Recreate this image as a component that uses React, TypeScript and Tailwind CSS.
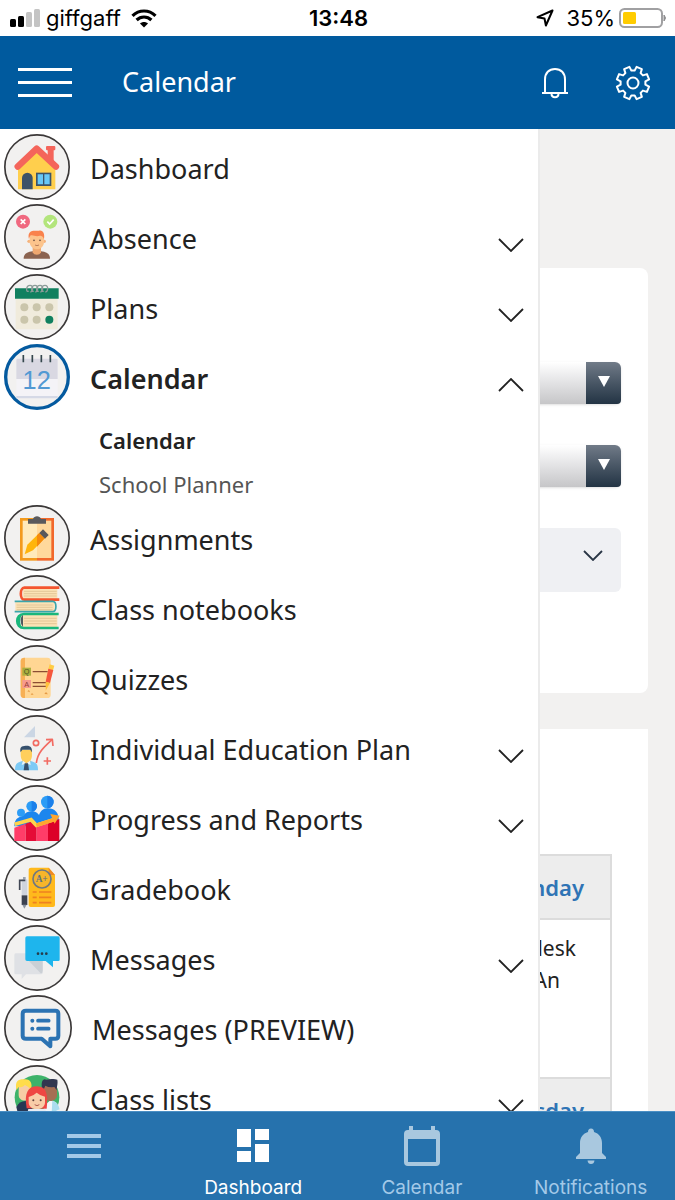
import type { ReactNode } from 'react';

type MenuItem = {
    label: string;
    icon: ReactNode;
    expandable?: boolean;
    active?: boolean;
    wide?: boolean;
    children?: string[];
};

const HouseIcon = () => (
    <>
        <path d="M131 44h18v50h-18z" fill="#f4655b" />
        <rect x="126" y="36" width="28" height="13" rx="3" fill="#f4655b" />
        <path d="M42 166v-68l56-50 56 50v68z" fill="#ffcf4d" />
        <path d="M41 98l57-54 58 54" fill="none" stroke="#f4655b" strokeWidth="19" strokeLinecap="round" strokeLinejoin="round" />
        <path d="M54 166v-34a16 16 0 0 1 32 0v34z" fill="#3d5368" />
        <rect x="96" y="116" width="46" height="40" fill="#3d5368" />
        <path d="M101 121h16v30h-16zM121 121h16v30h-16z" fill="#68c8f7" />
    </>
);

const AbsenceIcon = () => (
    <>
        <circle cx="57" cy="53" r="21" fill="#f0687f" />
        <path d="M50 46l14 14M64 46l-14 14" stroke="#fff" strokeWidth="5" />
        <circle cx="139" cy="53" r="21" fill="#b3e57c" />
        <path d="M130 53l7 7 12-13" fill="none" stroke="#fff" strokeWidth="5" />
        <path d="M59 164c0-15 10-20 27-22h25c17 2 27 7 27 22z" fill="#8b6350" />
        <path d="M86 125h25v20c-4 10-21 10-25 0z" fill="#efa870" />
        <circle cx="75" cy="112" r="5" fill="#f5b27b" />
        <circle cx="121" cy="112" r="5" fill="#f5b27b" />
        <path d="M77 98c0-12 43-12 43 0v16c0 11-9 22-21 22s-22-11-22-22z" fill="#fcc48c" />
        <path d="M75 105c-4-15 2-26 15-25h15c12-3 18 9 15 25-5-12-10-10-16-9-9 2-17-4-23-2-3 2-4 5-6 11z" fill="#f9824c" />
        <circle cx="90" cy="109" r="2.5" fill="#5b4038" />
        <circle cx="108" cy="109" r="2.5" fill="#5b4038" />
        <path d="M93 123q6 4 12 0" fill="none" stroke="#9a5c40" strokeWidth="2" />
    </>
);

const PlansIcon = () => (
    <>
        <path d="M35 73h126v93H35z" fill="#f0ebdc" />
        <path d="M33 43h131v31H33z" fill="#10805f" />
        <g fill="none" stroke="#8b9b98" strokeWidth="4">
            <path d="M75 51c-11 6-9-17 3-17s9 19 1 20" />
            <path d="M90 51c-11 6-9-17 3-17s9 19 1 20" />
            <path d="M105 51c-11 6-9-17 3-17s9 19 1 20" />
            <path d="M120 51c-11 6-9-17 3-17s9 19 1 20" />
        </g>
        <g fill="#cac5ab">
            <circle cx="61" cy="100" r="12" />
            <circle cx="98" cy="100" r="12" />
            <circle cx="136" cy="100" r="12" />
            <circle cx="61" cy="137" r="12" />
            <circle cx="98" cy="137" r="12" />
        </g>
        <circle cx="136" cy="137" r="12" fill="#10805f" />
    </>
);

const CalendarIcon = () => (
    <>
        <rect x="37" y="44" width="124" height="118" rx="4" fill="#f4f3f7" />
        <path d="M37 48q0-4 4-4h116q4 0 4 4v57H37z" fill="#d9d8e2" />
        <path d="M37 156h124v7H37z" fill="#d5d9e6" />
        <path d="M58 33v22M85 33v22M112 33v22M139 33v22" stroke="#35474d" strokeWidth="5" />
        <text x="98" y="134" textAnchor="middle" fontSize="76" fontFamily="Liberation Sans, sans-serif" fill="#5299d3">12</text>
    </>
);

const AssignmentsIcon = () => (
    <>
        <path d="M48 39h51v128H48z" fill="#f39a1c" />
        <path d="M99 39h51v128H99z" fill="#f1682b" />
        <path d="M56 47h43v112H56z" fill="#ffeabb" />
        <path d="M99 47h43v112H99z" fill="#ffd99c" />
        <path d="M72 56V42h15c3-11 21-11 24 0h15v14z" fill="#5a5a5c" />
        <path d="M62 148l8-29 36-35 16 16-35 36z" fill="#ffb50b" />
        <path d="M99 91l7-7 16 16-23 25z" fill="#f58a0b" />
        <path d="M106 84l11-11 17 17-11 11z" fill="#57575a" />
    </>
);

const BooksIcon = () => (
    <>
        <path d="M57 39h103v34H57z" fill="#fbe2b5" />
        <path d="M60 49h98M60 56h98M60 63h98" stroke="#d8b98a" strokeWidth="2" />
        <path d="M166 38H61c-14 0-14 36 0 36h105" fill="none" stroke="#f4552f" strokeWidth="8" />
        <path d="M34 81h118v28H34z" fill="#fbe2b5" />
        <path d="M38 90h108M38 97h108M38 104h108" stroke="#d8b98a" strokeWidth="2" />
        <path d="M32 79h114c13 0 13 31 0 31H32" fill="none" stroke="#3ba5ac" strokeWidth="5" />
        <path d="M52 120h108v36H52z" fill="#fbe2b5" />
        <path d="M60 130h98M60 138h98M60 146h98" stroke="#d8b98a" strokeWidth="2" />
        <path d="M57 118q-15 18 0 38z" fill="#4e5a5e" />
        <path d="M164 117H60c-27 0-27 42 0 42h104" fill="none" stroke="#19b77c" strokeWidth="8" />
        <path d="M56 117c-22 6-22 36 0 42-10-12-10-30 0-42z" fill="#19b77c" />
    </>
);

const QuizIcon = () => (
    <>
        <rect x="50" y="38" width="90" height="121" rx="10" fill="#ffd693" />
        <path d="M50 48q0-10 13-10v121q-13 0-13-10z" fill="#f7b055" />
        <rect x="55" y="68" width="26" height="24" fill="#abb03f" />
        <rect x="55" y="105" width="26" height="24" fill="#f59a8e" />
        <text x="68" y="88" textAnchor="middle" fontSize="22" fontFamily="Liberation Sans, sans-serif" fill="#4f5524">Q</text>
        <text x="68" y="125" textAnchor="middle" fontSize="22" fontFamily="Liberation Sans, sans-serif" fill="#933c37">A</text>
        <path d="M86 80h45M86 113h43M86 124h40" stroke="#8b4e33" strokeWidth="4" />
        <path d="M137 58l14 4-4 14-14-3z" fill="#ffcd45" />
        <path d="M133 71l15 4-10 39-13-4z" fill="#f5573d" />
        <path d="M125 110l13 4-13 23z" fill="#ffc13a" />
        <path d="M70 139l5-4 3 7zM80 149l4-5 5 5zM121 147l5-6 6 7z" fill="#e59a44" />
    </>
);

const EducationPlanIcon = () => (
    <>
        <path d="M60 67l33-34v34z" fill="#cbd6e4" />
        <g fill="none" stroke="#f26b62" strokeWidth="5">
            <circle cx="96" cy="84" r="8" />
            <path d="M97 144c4-31 22-47 46-69" />
            <path d="M126 74l19-1 2 20" strokeLinejoin="round" />
            <path d="M130 127v22M119 138h22" />
        </g>
        <path d="M33 166c0-19 5-24 24-29h21c19 5 24 10 24 29z" fill="#7dcaf5" />
        <path d="M56 127h23v14l-12 14-11-14z" fill="#f2b94a" />
        <path d="M50 104h34v16c0 29-34 29-34 0z" fill="#ffcf5c" />
        <path d="M50 112c-4-16 3-19 15-20 15-1 21 6 18 20l-4-8H55z" fill="#36506c" />
        <path d="M57 137l-4 13 14-5 13 5-2-13-11 8z" fill="#e7f4fb" />
        <path d="M62 145h10l3 21H59z" fill="#36506c" />
    </>
);

const ProgressIcon = () => (
    <>
        <path d="M31 124c0-18 8-27 20-29 8-3 13-15 31-16 14 0 19 6 23 11 4-10 12-20 25-20 24 0 34 14 34 34v20z" fill="#1c86ee" />
        <circle cx="51" cy="83" r="12" fill="#2c9cf6" />
        <circle cx="83" cy="64" r="16" fill="#2c9cf6" />
        <circle cx="130" cy="51" r="19" fill="#2c9cf6" />
        <path d="M83 48a16 16 0 0 1 0 32zM130 32a19 19 0 0 1 0 38z" fill="#1c80ea" />
        <path d="M31 128l34-12v52H31z" fill="#ff3d68" />
        <path d="M65 116l16-6 17 15v43H65z" fill="#e50c37" />
        <path d="M98 125l34-10v53H98z" fill="#ff3d68" />
        <path d="M132 115l34-13v66h-34z" fill="#dc0028" />
        <path d="M32 118l49-14 16 17 51-17" fill="none" stroke="#ffd34d" strokeWidth="11" />
        <path d="M97 121l53-17" stroke="#ffa52e" strokeWidth="11" />
        <path d="M139 87l28 5-15 24z" fill="#ffa52e" />
    </>
);

const GradebookIcon = () => (
    <>
        <path d="M81 38h53l19 22v90q0 6-6 6H80q-6 0-6-6V44q0-6 7-6z" fill="#ffb91c" />
        <path d="M134 38l19 22h-19z" fill="#ef8a25" />
        <circle cx="114" cy="72" r="27" fill="#f6b52a" stroke="#6f7882" strokeWidth="5" />
        <text x="113" y="82" textAnchor="middle" fontSize="28" fontWeight="700" fontFamily="Liberation Serif, serif" fill="#5c7081">A+</text>
        <path d="M86 111h12M105 111h37M86 127h12M105 127h37M86 143h12M105 143h37" stroke="#ee8121" strokeWidth="5" />
        <path d="M57 66h8v10h-8z" fill="#9aa3b0" />
        <path d="M53 73h17v48H53z" fill="#cfd4dd" />
        <path d="M53 121h17v29H53z" fill="#3c4250" />
        <path d="M55 149h13l-7 12z" fill="#8b93a0" />
        <path d="M64 76H47v29" fill="none" stroke="#414755" strokeWidth="5" />
    </>
);

const MessagesIcon = () => (
    <>
        <path d="M35 85h76q5 0 5 5v53q0 5-5 5H66l-13 14v-14H36q-5 0-5-5V90q0-5 4-5z" fill="#dfe1e5" />
        <path d="M74 107l36 38q6 0 6-8v-30z" fill="#cbd0d5" />
        <path d="M69 34h94q4 0 4 5v65q0 4-4 4h-16v19l-22-19H69q-5 0-5-5V39q0-5 5-5z" fill="#1eb5ed" />
        <circle cx="102" cy="86" r="4" fill="#263c4b" />
        <circle cx="114" cy="86" r="4" fill="#263c4b" />
        <circle cx="127" cy="86" r="4" fill="#263c4b" />
    </>
);

const PreviewIcon = () => (
    <>
        <path
            d="M66 47h88q9 0 9 9v66q0 9-9 9h-15v23l-26-23H66q-10 0-10-9V56q0-9 10-9z"
            fill="none"
            stroke="#2c73b3"
            strokeWidth="12"
            strokeLinejoin="round"
        />
        <circle cx="85" cy="77" r="6" fill="#2c73b3" />
        <circle cx="85" cy="101" r="6" fill="#2c73b3" />
        <path d="M102 77h32M102 101h32" stroke="#2c73b3" strokeWidth="11" strokeLinecap="round" />
    </>
);

const ClassListsIcon = () => (
    <>
        <circle cx="99" cy="97" r="67" fill="#3db36a" />
        <path d="M37 126q8-18 28-18l20 12v60H50z" fill="#283854" />
        <path d="M119 124l20-18q18 0 26 24l-20 50h-26z" fill="#f1f6fa" />
        <path d="M145 107q18 4 22 26l-24 10z" fill="#aadcef" />
        <path d="M44 60h34v30c0 22-34 22-34 0z" fill="#f7cda5" />
        <path d="M38 76c-8-31 9-34 24-33 18-1 24 12 19 31-5-7-11-10-18-14-8 8-15 7-20 7z" fill="#ffdc4b" />
        <path d="M120 62h39v27c0 25-39 25-39 0z" fill="#a56f54" />
        <path d="M116 80c-6-25-2-35 5-37 11 4 23-5 39 1 2 13-1 16-2 32l-7-10q-17 2-27-4z" fill="#313750" />
        <path d="M68 130c-8-45 3-66 31-66 29 0 34 25 29 67z" fill="#ef4743" />
        <path d="M74 96q15-4 24-13 12 10 25 12v17c0 28-49 28-49 0z" fill="#f9cda8" />
        <circle cx="88" cy="106" r="3" fill="#62423b" />
        <circle cx="110" cy="106" r="3" fill="#62423b" />
        <path d="M92 119q7 6 14 0" fill="none" stroke="#ae5d50" strokeWidth="3" />
        <path d="M73 132h51l14 50H60z" fill="#e9edf4" />
    </>
);

const menuItems: MenuItem[] = [
    { label: 'Dashboard', icon: <HouseIcon /> },
    { label: 'Absence', icon: <AbsenceIcon />, expandable: true },
    { label: 'Plans', icon: <PlansIcon />, expandable: true },
    { label: 'Calendar', icon: <CalendarIcon />, expandable: true, active: true, children: ['Calendar', 'School Planner'] },
    { label: 'Assignments', icon: <AssignmentsIcon /> },
    { label: 'Class notebooks', icon: <BooksIcon /> },
    { label: 'Quizzes', icon: <QuizIcon /> },
    { label: 'Individual Education Plan', icon: <EducationPlanIcon />, expandable: true },
    { label: 'Progress and Reports', icon: <ProgressIcon />, expandable: true },
    { label: 'Gradebook', icon: <GradebookIcon /> },
    { label: 'Messages', icon: <MessagesIcon />, expandable: true },
    { label: 'Messages (PREVIEW)', icon: <PreviewIcon />, wide: true },
    { label: 'Class lists', icon: <ClassListsIcon />, expandable: true },
];

const MenuBadge = ({ item }: { item: MenuItem }) => {
    const width = item.wide ? 204 : 198;
    const stroke = item.active ? 10 : 5;
    return (
        <svg
            viewBox={`0 0 ${width} 198`}
            className={item.wide ? 'h-[66px] w-[68px] shrink-0' : 'h-[66px] w-[66px] shrink-0'}
            aria-hidden="true"
        >
            <ellipse
                cx={width / 2}
                cy="99"
                rx={(width - stroke) / 2}
                ry={(198 - stroke) / 2}
                fill="#f2f1f0"
                stroke={item.active ? '#045a9f' : '#3b3838'}
                strokeWidth={stroke}
            />
            {item.icon}
        </svg>
    );
};

const Chevron = ({ up = false }: { up?: boolean }) => (
    <svg viewBox="0 0 26 14" className="mt-4 h-[14px] w-[26px] shrink-0" fill="none" stroke="#222" strokeWidth="1.8" aria-hidden="true">
        <path d={up ? 'M1 13L13 1l12 12' : 'M1 1l12 12L25 1'} />
    </svg>
);

const StatusBar = () => (
    <div className="grid h-9 shrink-0 grid-cols-3 items-center bg-white pl-[10px] pr-2 font-['Inter',sans-serif] text-[22px] text-black">
        <div className="flex items-center gap-[6px]">
            <svg viewBox="0 0 30 20" className="h-5 w-[30px]" aria-hidden="true">
                <rect x="0" y="11" width="6" height="8" rx="1.5" fill="#000" />
                <rect x="8" y="8" width="6" height="11" rx="1.5" fill="#000" />
                <rect x="16" y="4" width="6" height="15" rx="1.5" fill="#c4c4c4" />
                <rect x="24" y="1" width="6" height="18" rx="1.5" fill="#c4c4c4" />
            </svg>
            <span>giffgaff</span>
            <svg viewBox="0 0 26 19" className="ml-1 h-[19px] w-[26px]" fill="none" stroke="#000" strokeWidth="3.2" aria-hidden="true">
                <path d="M1.5 6.8c6.5-6.4 16.5-6.4 23 0" />
                <path d="M5.6 11c4.2-4 10.6-4 14.8 0" />
                <path d="M9 14.500c2.400-2 5.600-2 8 0L13 18.500z" fill="#000" stroke="none" />
            </svg>
        </div>
        <div className="text-center font-semibold">13:48</div>
        <div className="flex items-center justify-end">
            <svg viewBox="0 0 18 18" className="mr-3 h-[18px] w-[18px]" fill="none" stroke="#000" strokeWidth="2" strokeLinejoin="round" aria-hidden="true">
                <path d="M16.5 1.5L1.5 8.200l7 1.300 1.400 7z" />
            </svg>
            <span className="mr-1">35%</span>
            <svg viewBox="0 0 48 20" className="h-5 w-12" aria-hidden="true">
                <rect x="1" y="1" width="42" height="18" rx="4.5" fill="none" stroke="#a0a0a2" strokeWidth="2" />
                <rect x="4" y="4" width="13" height="12" rx="1.5" fill="#ffcc00" />
                <path d="M45 7q3 3 0 6z" fill="#8e8e90" stroke="#8e8e90" />
            </svg>
        </div>
    </div>
);

const gearPoints = Array.from({ length: 8 }, (_, i) => {
    const center = i * 45 + 22.5;
    return [
        [-15, 12.5],
        [-10, 16.5],
        [10, 16.5],
        [15, 12.5],
    ].map(([offset, radius]) => {
        const angle = ((center + offset) * Math.PI) / 180;
        return `${18 + radius * Math.sin(angle)},${18 - radius * Math.cos(angle)}`;
    });
}).flat().join(' ');

const Header = () => (
    <header className="flex h-[93px] shrink-0 items-center bg-[#005a9e] pl-[18px] pr-6 text-white">
        <button aria-label="Toggle menu" className="flex w-[54px] flex-col gap-[10px]">
            <span className="h-[3px] w-full bg-white" />
            <span className="h-[3px] w-full bg-white" />
            <span className="h-[3px] w-full bg-white" />
        </button>
        <h1 className="ml-[50px] flex-1 text-[27px]">Calendar</h1>
        <button aria-label="Alerts" className="mr-[46px]">
            <svg viewBox="0 0 28 32" className="h-8 w-7" fill="none" stroke="#fff" strokeWidth="2" aria-hidden="true">
                <path d="M4 26V12.500C4 6 8 2 14 2s10 4 10 10.500V26M1 26h26M10.500 26.500c0 5 7 5 7 0" />
            </svg>
        </button>
        <button aria-label="Settings">
            <svg viewBox="0 0 36 36" className="h-9 w-9" fill="none" stroke="#fff" strokeWidth="2" strokeLinejoin="round" aria-hidden="true">
                <polygon points={gearPoints} />
                <circle cx="18" cy="18" r="5.500" />
            </svg>
        </button>
    </header>
);

const Drawer = () => (
    <nav className="absolute inset-y-0 left-0 w-4/5 overflow-hidden border-r-2 border-[#ebebeb] bg-white pl-1 pr-[14px] pt-[3px]">
        <ul>
            {menuItems.map((item) => (
                <li key={item.label}>
                    <button className="flex h-[70px] w-full items-center gap-5 text-left" aria-expanded={item.expandable ? !!item.active : undefined}>
                        <MenuBadge item={item} />
                        <span className={item.active ? 'flex-1 pt-1 text-[27px] font-semibold' : 'flex-1 pt-1 text-[27px]'}>{item.label}</span>
                        {item.expandable && <Chevron up={item.active} />}
                    </button>
                    {item.children && (
                        <ul className="h-[91px] pl-[95px] pt-[5px] text-[22px]">
                            {item.children.map((child) => (
                                <li key={child} className="h-11">
                                    <a
                                        href="#"
                                        className={child === item.label ? 'block leading-[46px] font-semibold' : 'block leading-[46px] text-[#555]'}
                                    >
                                        {child}
                                    </a>
                                </li>
                            ))}
                        </ul>
                    )}
                </li>
            ))}
        </ul>
    </nav>
);

const FilterSelect = ({ label }: { label: string }) => (
    <div className="relative h-[42px]">
        <select
            aria-label={label}
            className="h-full w-full appearance-none rounded-md bg-linear-to-b from-white via-[#e2e2e4] to-[#c6c6c8] shadow-sm"
        />
        <span className="pointer-events-none absolute inset-y-0 right-0 flex w-[35px] items-center justify-center rounded-tr-md rounded-br-sm bg-linear-to-b from-[#717b88] to-[#233444] pb-1">
            <svg viewBox="0 0 12 11" className="h-[11px] w-3" aria-hidden="true">
                <path d="M0 0h12L6 11z" fill="#fff" />
            </svg>
        </span>
    </div>
);

const Content = () => (
    <div className="px-[27px] pt-[139px]">
        <section className="flex flex-col gap-[41px] rounded-lg bg-white px-[27px] pt-[94px] pb-[101px]">
            <FilterSelect label="View" />
            <FilterSelect label="Period" />
            <button aria-label="More options" className="flex h-16 items-start justify-end rounded-md bg-[#eff0f3] pt-[22px] pr-[18px]">
                <svg viewBox="0 0 20 11" className="h-[11px] w-5" fill="none" stroke="#293545" strokeWidth="1.8" aria-hidden="true">
                    <path d="M1 1l9 9 9-9" />
                </svg>
            </button>
        </section>
        <section className="mt-9 bg-white px-9 pt-[125px] pb-9">
            <table className="w-full border-collapse text-right text-[22px]">
                <tbody>
                    <tr>
                        <th className="h-16 border-2 border-[#dcdcdc] bg-[#ededed] pr-[26px] font-semibold text-[#2f74b5]">Monday</th>
                    </tr>
                    <tr>
                        <td className="h-[159px] border-2 border-[#dcdcdc] pt-3 pr-[34px] align-top text-[21px] leading-8">
                            <p>desk</p>
                            <p className="pr-4">An</p>
                        </td>
                    </tr>
                    <tr>
                        <th className="h-16 border-2 border-[#dcdcdc] bg-[#ededed] pr-[26px] font-semibold text-[#2f74b5]">Tuesday</th>
                    </tr>
                </tbody>
            </table>
        </section>
    </div>
);

const BottomNav = () => (
    <nav className="grid h-[89px] shrink-0 grid-cols-4 border-t border-[#4a8fc4] bg-[#2672ad] font-['Inter',sans-serif] text-[19px] text-[#a3c9e8]">
        <button aria-label="Menu" className="flex flex-col items-center gap-[6px] pt-[22px]">
            <span className="h-1 w-[34px] bg-[#a3c9e8]" />
            <span className="h-1 w-[34px] bg-[#a3c9e8]" />
            <span className="h-1 w-[34px] bg-[#a3c9e8]" />
        </button>
        <a href="#" className="flex flex-col items-center gap-[10px] pt-3 text-white">
            <svg viewBox="0 0 42 42" className="h-[42px] w-[42px]" fill="currentColor" aria-hidden="true">
                <path d="M5 5h14v18H5zM23 5h14v11H23zM5 27h14v11H5zM23 20h14v18H23z" />
            </svg>
            <span className="leading-6">Dashboard</span>
        </a>
        <a href="#" className="flex flex-col items-center gap-[10px] pt-3">
            <svg viewBox="0 0 42 42" className="h-[42px] w-[42px]" fill="#a9c8df" aria-hidden="true">
                <path fillRule="evenodd" d="M8 2h4v4h18V2h4v4h1q4 0 4 4v28q0 4-4 4H7q-4 0-4-4V10q0-4 4-4h1zM7 15v23h28V15z" />
            </svg>
            <span className="leading-6">Calendar</span>
        </a>
        <a href="#" className="flex flex-col items-center gap-[10px] pt-3">
            <svg viewBox="0 0 42 42" className="h-[42px] w-[42px]" fill="#a9c8df" aria-hidden="true">
                <path d="M21 4.500q3 0 3 3.500c5 1.500 8 5.500 8 11v10l4 4V35H6v-2l4-4V19c0-5.500 3-9.500 8-11q0-3.500 3-3.500zM17.500 36.500h7q-.5 3.500-3.500 3.500t-3.500-3.500z" />
            </svg>
            <span className="leading-6">Notifications</span>
        </a>
    </nav>
);

const App = () => {
    return (
        <div className="flex h-screen flex-col overflow-hidden bg-[#f2f1f0] font-['Noto_Sans',sans-serif] text-[#222]">
            <StatusBar />
            <Header />
            <main className="relative min-h-0 flex-1 overflow-hidden">
                <Content />
                <Drawer />
            </main>
            <BottomNav />
        </div>
    );
}

export default App;
